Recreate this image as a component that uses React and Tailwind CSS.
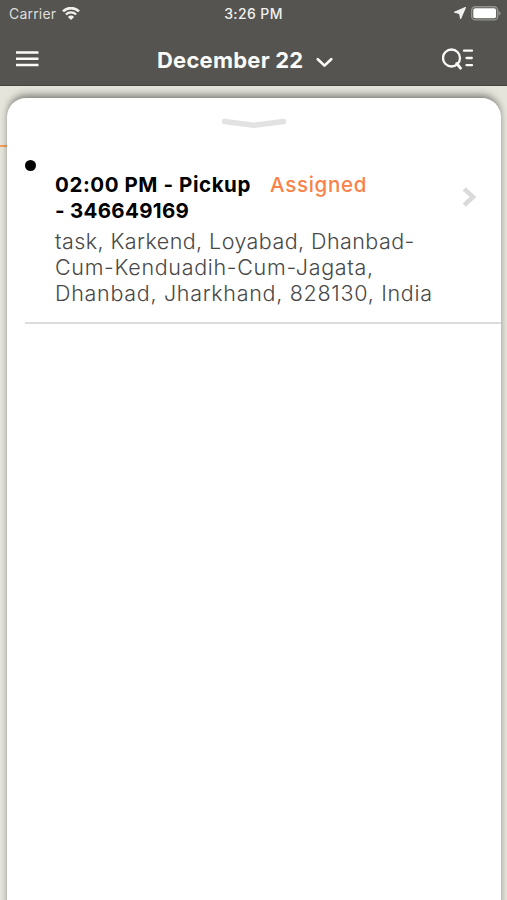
const StatusBar = () => (
  <div className="flex h-7 items-center pl-[9px] pr-[6px] text-[#f1f1ef]">
    <div className="flex flex-1 items-center gap-[6px]">
      <span className="text-[14px] leading-7 tracking-[0.2px] text-[#dededb]">Carrier</span>
      <svg width="18" height="14" viewBox="0 0 18 14" fill="none" stroke="currentColor">
        <path d="M1 4.4 A11.4 11.4 0 0 1 17 4.4" strokeWidth="2.7" />
        <path d="M3.9 7.5 A7.3 7.3 0 0 1 14.1 7.5" strokeWidth="2.3" />
        <path d="M9 13.1 L5.9 9.9 A4.4 4.4 0 0 1 12.1 9.9 Z" fill="currentColor" stroke="none" />
      </svg>
    </div>
    <span className="mr-[3px] text-[14px] font-medium leading-7 tracking-[0.4px]">3:26 PM</span>
    <div className="flex flex-1 items-center justify-end gap-[5px]">
      <svg className="-mt-[2px]" width="12" height="12" viewBox="0 0 12 12" fill="currentColor">
        <path d="M11.4 0.6 L0.6 5.2 L5.6 6.5 L6.6 11.4 Z" stroke="currentColor" strokeWidth="1.2" strokeLinejoin="round" />
      </svg>
      <svg className="-mt-[2px]" width="30" height="15" viewBox="0 0 30 15">
        <rect x="0.7" y="0.7" width="26" height="13.2" rx="3.6" fill="none" stroke="#92928e" strokeWidth="1.4" />
        <rect x="2.3" y="2.3" width="22.8" height="10" rx="2" fill="#fff" />
        <path d="M27.6 4.7 Q31.5 7.3 27.6 9.9 Z" fill="#92928e" />
      </svg>
    </div>
  </div>
);

const NavBar = () => (
  <div className="flex h-[58px] items-center pl-4 pr-[33px] pt-[7px] text-[#fafaf8]">
    <svg className="mb-1" width="23" height="18" viewBox="0 0 23 18" stroke="currentColor" strokeWidth="2.4">
      <path d="M0 2.5H22.5M0 8.7H22.5M0 15H22.5" />
    </svg>
    <div className="flex flex-1 items-center pl-[118px]">
      <h1 className="mb-[2px] w-[148px] whitespace-nowrap text-[22px] font-bold leading-7 tracking-[0.22px]">December 22</h1>
      <svg className="ml-[11px] mt-1" width="17" height="12" viewBox="0 0 17 12" fill="none" stroke="currentColor" strokeWidth="2.6">
        <path d="M1.8 2.2L8.5 8.6L15.2 2.2" strokeLinecap="round" strokeLinejoin="round" />
      </svg>
    </div>
    <svg className="mb-[3px]" width="32" height="22" viewBox="0 0 32 22" fill="none" stroke="currentColor" strokeWidth="2.3">
      <circle cx="9.5" cy="10" r="8.5" />
      <path d="M14.7 15.5L18.5 20.2" strokeWidth="2.8" strokeLinecap="round" />
      <path d="M22 2.7H30M24.5 10H29.8M24.5 17.2H30" strokeLinecap="round" />
    </svg>
  </div>
);

const TaskRow = () => (
  <div className="ml-[18px] mt-[29px] flex h-[165px] border-b-2 border-[#dcdcdc]">
    <span className="mt-[1px] h-[11px] w-[11px] shrink-0 rounded-full bg-black" />
    <div className="ml-[19px] mt-[13px] flex-1 whitespace-nowrap">
      <div className="flex text-[20.5px] leading-[26px]">
        <div className="w-[215px] font-bold text-black">
          <p className="tracking-[0.57px]">02:00 PM - Pickup</p>
          <p className="tracking-[0.3px]">- 346649169</p>
        </div>
        <span className="font-medium tracking-[0.7px] text-[#fa8148]">Assigned</span>
      </div>
      <div className="mt-1 text-[21.5px] font-light leading-[26px] text-[#484848]">
        <p className="tracking-[0.43px]">task, Karkend, Loyabad, Dhanbad-</p>
        <p className="tracking-[0.68px]">Cum-Kenduadih-Cum-Jagata,</p>
        <p className="tracking-[0.7px]">Dhanbad, Jharkhand, 828130, India</p>
      </div>
    </div>
    <svg className="mr-[24px] mt-[28px]" width="15" height="20" viewBox="0 0 15 20" fill="none" stroke="#dadada" strokeWidth="4.6">
      <path d="M2.2 1.9L11 10L2.2 18.1" />
    </svg>
  </div>
);

const App = () => {
  return (
    <div className="flex h-[900px] w-[507px] flex-col overflow-hidden bg-[#e6e5dc] font-['Inter',sans-serif]">
      <header className="relative z-10 h-[86px] shrink-0 border-b border-[#45443f] bg-[#555450]">
        <StatusBar />
        <NavBar />
      </header>

      {/* Map strip with the task sheet on top */}
      <main className="flex flex-1 pt-3">
        <div className="mt-[47px] h-[2px] w-[7px] shrink-0 bg-[#f5a05c]" />
        <section className="-mb-5 mr-[6px] flex-1 rounded-t-[19px] bg-white shadow-[0_-6px_8px_-3px_rgba(0,0,0,0.4),0_0_6px_rgba(0,0,0,0.2)]">
          <svg className="mx-auto mt-[19px]" width="66" height="13" viewBox="0 0 66 13" fill="none" stroke="#e2e2e2" strokeWidth="5.5">
            <path d="M3.5 4.5L33 8.2L62.5 4.5" strokeLinecap="round" strokeLinejoin="round" />
          </svg>
          <TaskRow />
        </section>
      </main>
    </div>
  );
};

export default App;
